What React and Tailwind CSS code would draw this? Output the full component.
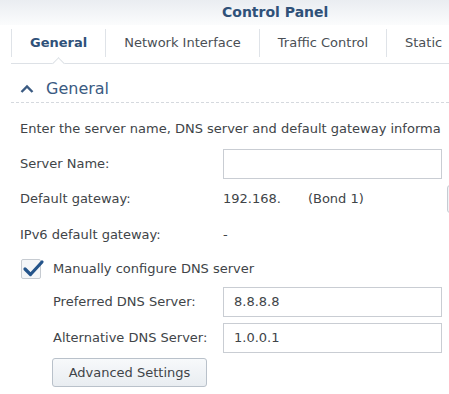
import React from "react";

const font = { fontFamily: '"DejaVu Sans", Verdana, sans-serif' };

function Tab({ children, active }) {
  return (
    <div
      className={`relative h-[28px] flex items-center px-[18px] border-r border-[#dfe3e8] whitespace-nowrap text-[13px] ${
        active ? "font-bold text-[#2f5179]" : "text-[#4a4f55]"
      }`}
    >
      {children}
    </div>
  );
}

function Label({ children, indent }) {
  return (
    <div className={`${indent ? "pl-[53px]" : "pl-[20px]"} w-[223px] shrink-0 text-[13px] text-[#404448] whitespace-nowrap`}>
      {children}
    </div>
  );
}

export default function App() {
  return (
    <div className="w-[449px] h-[394px] bg-white overflow-hidden" style={font}>
      {/* title bar */}
      <div className="h-[25px] bg-gradient-to-b from-[#eaedf1] to-[#fbfcfd] flex items-center">
        <div className="pl-[222px] text-[14px] font-bold text-[#2f5179] whitespace-nowrap">Control Panel</div>
      </div>
      {/* tabs */}
      <div className="relative ml-[11px] h-[39px] pt-[4px] border-b border-[#dde1e6]">
        <div className="flex border-l border-[#dfe3e8] w-max">
          <Tab active>General</Tab>
          <Tab>Network Interface</Tab>
          <Tab>Traffic Control</Tab>
          <Tab>Static</Tab>
        </div>
        <div className="absolute left-[43px] bottom-[-5px] w-[9px] h-[9px] bg-white border-l border-t border-[#dde1e6] rotate-45" />
      </div>
      {/* section header */}
      <div className="ml-[11px] h-[39px] pt-[15px] border-b border-dashed border-[#d5d9de] flex items-start">
        <div className="h-[20px] flex items-center pl-[9px]">
          <svg width="14" height="10" viewBox="0 0 14 10" className="mr-[12px]">
            <path d="M1.5 8 L7 2.5 L12.5 8" fill="none" stroke="#3b5b82" strokeWidth="2.4" />
          </svg>
          <span className="text-[16px] text-[#3b5b82] leading-[20px]">General</span>
        </div>
      </div>
      {/* description */}
      <div className="pt-[17px] pl-[20px] text-[13px] leading-[18px] text-[#404448] whitespace-nowrap overflow-hidden">
        Enter the server name, DNS server and default gateway informa
      </div>
      {/* server name */}
      <div className="mt-[11px] h-[30px] flex items-center">
        <Label>Server Name:</Label>
        <div className="w-[219px] h-[30px] shrink-0 border border-[#c9cdd3] bg-white" />
      </div>
      {/* default gateway */}
      <div className="h-[40px] flex items-center relative">
        <Label>Default gateway:</Label>
        <div className="text-[13px] text-[#404448] whitespace-nowrap">
          192.168.<span className="ml-[27px]">(Bond 1)</span>
        </div>
        <div className="absolute left-[447px] top-[6px] w-[20px] h-[28px] border border-[#c6ccd3] rounded-[3px] bg-[#f1f3f6]" />
      </div>
      {/* ipv6 */}
      <div className="h-[32px] flex items-center">
        <Label>IPv6 default gateway:</Label>
        <div className="text-[13px] text-[#404448]">-</div>
      </div>
      {/* checkbox */}
      <div className="h-[36px] flex items-center pl-[21px]">
        <div className="w-[20px] h-[20px] shrink-0 border border-[#c6cbd1] bg-[#f4f6f8] rounded-[2px] relative mr-[12px]">
          <svg width="24" height="20" viewBox="0 0 24 20" className="absolute left-[0px] top-[-1px]">
            <path d="M3 10 L8.5 15.5 L20 3" fill="none" stroke="#24548a" strokeWidth="3.2" strokeLinecap="round" strokeLinejoin="round" />
          </svg>
        </div>
        <span className="text-[13px] text-[#404448] whitespace-nowrap">Manually configure DNS server</span>
      </div>
      {/* preferred */}
      <div className="h-[30px] flex items-center">
        <Label indent>Preferred DNS Server:</Label>
        <div className="w-[219px] h-[30px] shrink-0 border border-[#c9cdd3] bg-white flex items-center pl-[10px] text-[13px] text-[#404448]">8.8.8.8</div>
      </div>
      <div className="mt-[6px] h-[30px] flex items-center">
        <Label indent>Alternative DNS Server:</Label>
        <div className="w-[219px] h-[30px] shrink-0 border border-[#c9cdd3] bg-white flex items-center pl-[10px] text-[13px] text-[#404448]">1.0.0.1</div>
      </div>
      <div className="mt-[5px] pl-[52px]">
        <button className="h-[29px] w-[155px] rounded-[3px] border border-[#b9c1ca] bg-gradient-to-b from-[#f7f9fb] to-[#e9edf1] text-[13px] text-[#404448]">
          Advanced Settings
        </button>
      </div>
    </div>
  );
}
